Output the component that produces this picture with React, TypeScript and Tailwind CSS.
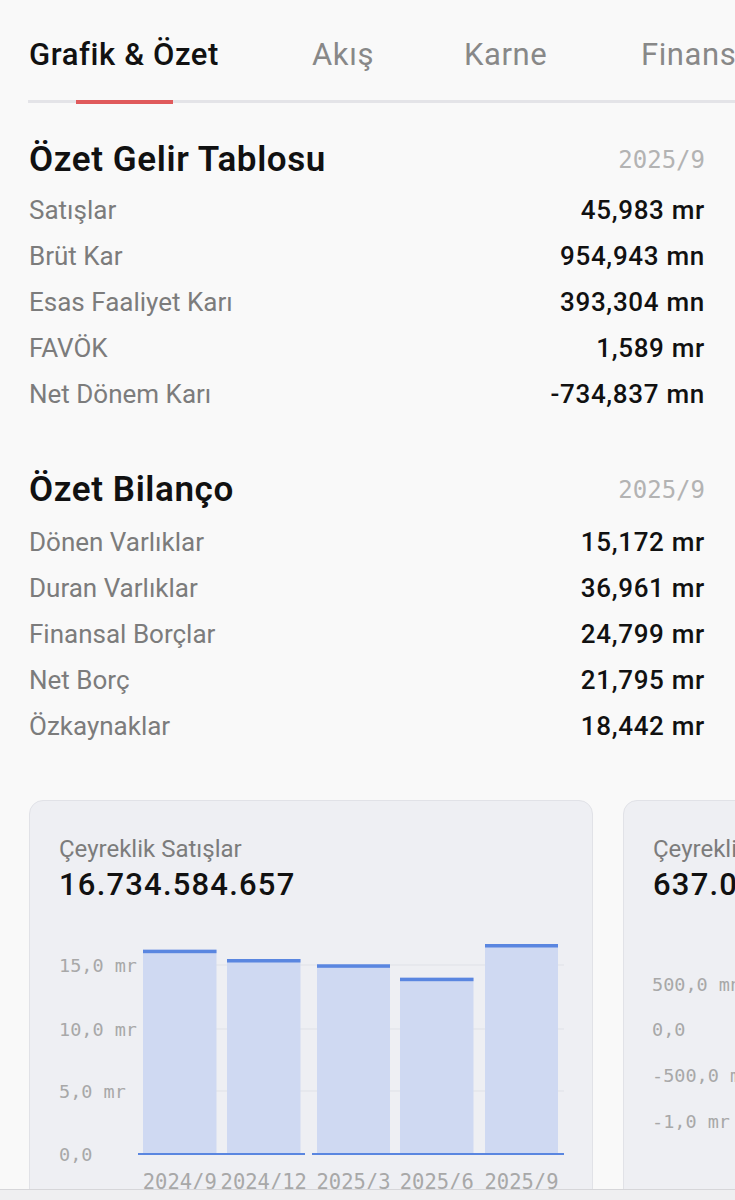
import { Fragment } from 'react'

type Row = { label: string; value: string }

const gelir: Row[] = [
  { label: 'Satışlar', value: '45,983 mr' },
  { label: 'Brüt Kar', value: '954,943 mn' },
  { label: 'Esas Faaliyet Karı', value: '393,304 mn' },
  { label: 'FAVÖK', value: '1,589 mr' },
  { label: 'Net Dönem Karı', value: '-734,837 mn' },
]

const bilanco: Row[] = [
  { label: 'Dönen Varlıklar', value: '15,172 mr' },
  { label: 'Duran Varlıklar', value: '36,961 mr' },
  { label: 'Finansal Borçlar', value: '24,799 mr' },
  { label: 'Net Borç', value: '21,795 mr' },
  { label: 'Özkaynaklar', value: '18,442 mr' },
]

const bars = [
  { x: 113, w: 73.5, top: 44.7, label: '2024/9' },
  { x: 197, w: 73.5, top: 54, label: '2024/12' },
  { x: 287, w: 73, top: 59.3, label: '2025/3' },
  { x: 370, w: 73.5, top: 72.7, label: '2025/6' },
  { x: 455, w: 73, top: 39, label: '2025/9' },
]

const MONO = '"DejaVu Sans Mono", "Liberation Mono", monospace'

function Section({
  title,
  rows,
  className,
  rowsGap,
}: {
  title: string
  rows: Row[]
  className?: string
  rowsGap: string
}) {
  return (
    <section className={className}>
      <div className="flex h-[40px] items-center justify-between pl-[29px] pr-[30px]">
        <h2 className="text-[35px] font-semibold tracking-[0.6px] text-[#111]">{title}</h2>
        <span className="text-[24px] text-[#b3b3b3]" style={{ fontFamily: MONO }}>
          2025/9
        </span>
      </div>
      <div className={`flex flex-col pl-[29px] pr-[30px] ${rowsGap}`}>
        {rows.map((r) => (
          <div key={r.label} className="flex h-[46px] items-center justify-between">
            <span className="text-[26px] text-[#7c7c7c]">{r.label}</span>
            <span className="text-[26px] font-medium tracking-[0.7px] text-[#111]">{r.value}</span>
          </div>
        ))}
      </div>
    </section>
  )
}

function SalesChart() {
  return (
    <svg width="562" height="300" className="block">
      {[60, 124, 186].map((y) => (
        <line key={y} x1="115" x2="534" y1={y} y2={y} stroke="#dfe1e7" strokeWidth="1" />
      ))}
      {bars.map((b) => (
        <Fragment key={b.label}>
          <rect x={b.x} y={b.top} width={b.w} height={248 - b.top} fill="#cfd9f2" />
          <rect x={b.x} y={b.top} width={b.w} height="3.5" fill="#5a86e0" />
          <text
            x={b.x + b.w / 2}
            y="284"
            textAnchor="middle"
            fontSize="20.5"
            fill="#a8a8a8"
            fontFamily={MONO}
          >
            {b.label}
          </text>
        </Fragment>
      ))}
      <line x1="108" x2="275" y1="249" y2="249" stroke="#5a86e0" strokeWidth="2" />
      <line x1="282" x2="534" y1="249" y2="249" stroke="#5a86e0" strokeWidth="2" />
      {[
        { y: 60, t: '15,0 mr' },
        { y: 124, t: '10,0 mr' },
        { y: 186, t: '5,0 mr' },
        { y: 249, t: '0,0' },
      ].map((l) => (
        <text key={l.t} x="29" y={l.y + 6.5} fontSize="18.5" fill="#a8a8a8" fontFamily={MONO}>
          {l.t}
        </text>
      ))}
    </svg>
  )
}

function ProfitChart() {
  return (
    <svg width="562" height="300" className="block">
      {[
        { y: 79, t: '500,0 mn' },
        { y: 124, t: '0,0' },
        { y: 170, t: '-500,0 mn' },
        { y: 216, t: '-1,0 mr' },
      ].map((l) => (
        <text key={l.t} x="28" y={l.y + 6.5} fontSize="18.5" fill="#a8a8a8" fontFamily={MONO}>
          {l.t}
        </text>
      ))}
    </svg>
  )
}

function Card({
  label,
  value,
  children,
}: {
  label: string
  value: string
  children: React.ReactNode
}) {
  return (
    <div className="h-[420px] w-[564px] shrink-0 overflow-hidden rounded-[14px] border border-[#e1e2e7] bg-[#eeeff3]">
      <div className="px-[29px] pt-[32px]">
        <div className="whitespace-nowrap text-[24px] leading-[32px] text-[#7c7c7c]">{label}</div>
        <div className="whitespace-nowrap text-[31px] font-medium leading-[40px] tracking-[1.2px] text-[#111]">
          {value}
        </div>
      </div>
      {children}
    </div>
  )
}

export default function App() {
  return (
    <div
      className="relative h-[1200px] w-[735px] overflow-hidden bg-[#f9f9f9]"
      style={{ fontFamily: 'Roboto, "Noto Sans", sans-serif' }}
    >
      <nav className="flex pl-[29px] pt-[35px] text-[31px] leading-[40px] tracking-[0.6px]">
        <span className="w-[283px] shrink-0 font-medium text-[#111]">Grafik &amp; Özet</span>
        <span className="w-[152px] shrink-0 text-[#888]">Akış</span>
        <span className="w-[177px] shrink-0 text-[#888]">Karne</span>
        <span className="shrink-0 whitespace-nowrap text-[#888]">Finansallar</span>
      </nav>
      <div className="relative ml-[28px] mt-[25px] h-[4px]">
        <div className="mt-[1px] h-[3px] bg-[#e4e4e8]" />
        <div className="absolute left-[48px] top-0 h-[4px] w-[97px] bg-[#e05a5c]" />
      </div>

      <Section title="Özet Gelir Tablosu" rows={gelir} className="mt-[36px]" rowsGap="mt-[7px]" />
      <Section title="Özet Bilanço" rows={bilanco} className="mt-[53px]" rowsGap="mt-[9px]" />

      <div className="mt-[51px] flex gap-[30px] pl-[29px]">
        <Card label="Çeyreklik Satışlar" value="16.734.584.657">
          <SalesChart />
        </Card>
        <Card label="Çeyreklik Net Kar" value="637.048.112">
          <ProfitChart />
        </Card>
      </div>

      <div className="absolute bottom-0 left-0 h-[11.5px] w-full border-t border-[#d6d6d9] bg-[#efeff1]" />
    </div>
  )
}
